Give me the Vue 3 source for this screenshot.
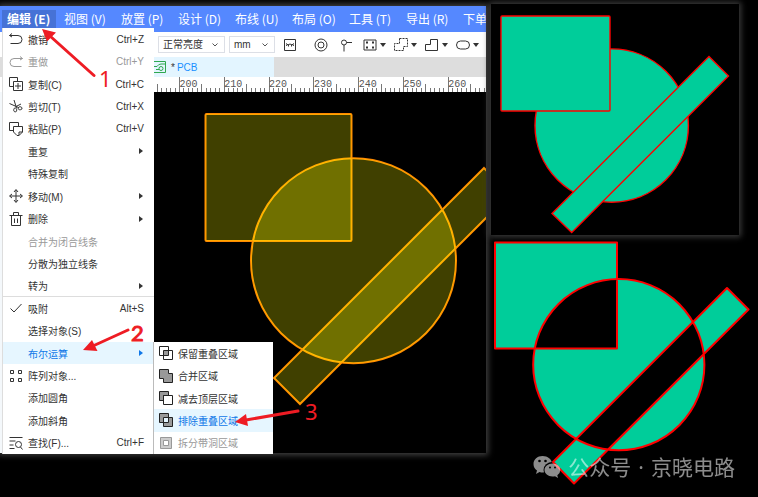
<script setup>
const menus = ['编辑 (E)', '视图 (V)', '放置 (P)', '设计 (D)', '布线 (U)', '布局 (O)', '工具 (T)', '导出 (R)', '下单']

const items = [
  { label: '撤销', key: 'Ctrl+Z', icon: 'undo' },
  { label: '重做', key: 'Ctrl+Y', icon: 'redo', off: true },
  { label: '复制(C)', key: 'Ctrl+C', icon: 'copy' },
  { label: '剪切(T)', key: 'Ctrl+X', icon: 'cut' },
  { label: '粘贴(P)', key: 'Ctrl+V', icon: 'paste' },
  { label: '重复', more: true },
  { label: '特殊复制' },
  { label: '移动(M)', more: true, icon: 'move' },
  { label: '删除', more: true, icon: 'trash' },
  { label: '合并为闭合线条', off: true },
  { label: '分散为独立线条' },
  { label: '转为', more: true },
  { label: '吸附', key: 'Alt+S', icon: 'check', rule: true },
  { label: '选择对象(S)' },
  { label: '布尔运算', more: true, on: true },
  { label: '阵列对象...', icon: 'array' },
  { label: '添加圆角' },
  { label: '添加斜角' },
  { label: '查找(F)...', key: 'Ctrl+F', icon: 'find' },
]

const icons = {
  undo: 'M3 1.5L.5 3.5L3 5M.5 3.5H9a4 4 0 0 1 0 8H1.5',
  redo: 'M11 1.5l2.500 2L11 5M13.500 3.500H5a4 4 0 0 0 0 8h7.500',
  copy: 'M4 9.5H0.5v-9h8V4M4.5 4.5h9v9h-9zM9 6v6M6 9h6',
  cut: 'M0.5 4.5l9 4M5 1l2.500 8M10 8a2 1.500 0 1 0 3 1a2 1.500 0 0 0-3-1M6.500 9a1.500 2 0 1 0 1 3a1.500 2 0 0 0-1-3M7 7.500l5-2.500',
  paste: 'M4 8.500H0.5v-8h9V4M4.500 4.500h9v5.500l-3.500 3.500h-2L4.500 10zM10 13.500V10h3.500',
  move: 'M7 1v12M1 7h12M5 3l2-2.500L9 3M5 11l2 2.500L9 11M3 5L.5 7L3 9M11 5l2.500 2L11 9',
  trash: 'M0.500 3.500h13M4.500 3V0.500h5V3M2.500 4v9.500h9V4M5.500 6.500v4.500M8.500 6.500v4.500',
  check: 'M1.500 7.500l3.500 3.500l7.500-8',
  array: 'M1.500 1.500h3v3h-3zM9.500 1.500h3v3h-3zM1.500 9.500h3v3h-3zM9.500 9.500h3v3h-3z',
  find: 'M0.500 1.500h13M0.500 5h6M0.500 9h4M0.500 12.500h5M12.500 8.500a3 3 0 1 1-6 0a3 3 0 1 1 6 0M11.500 11l2 2.500',
}

const booleans = [
  { label: '保留重叠区域', fill: 'M4.500 4.500h5v5h-5z', line: 'M0.500 0.500h9v9h-9zM4.500 4.500h9v9h-9z' },
  { label: '合并区域', fill: 'M0.500 0.500h9v4h4v9h-9v-4h-4z', line: 'M0.500 0.500h9v4h4v9h-9v-4h-4z' },
  { label: '减去顶层区域', fill: 'M0.500 0.500h9v4h-5v5h-4z', line: 'M0.500 0.500h9v4h-5v5h-4zM4.500 4.500h9v9h-9z' },
  { label: '排除重叠区域', fill: 'M0.500 0.500h9v4h4v9h-9v-4h-4zM4.500 4.500v5h5v-5z', line: 'M0.500 0.500h9v9h-9zM4.500 4.500h9v9h-9z', on: true },
  { label: '拆分带洞区域', fill: 'M1.500 1.500h11v11h-11zM4.500 4.500v5h5v-5z', line: 'M1.500 1.500h11v11h-11zM4.500 4.500h5v5h-5z', off: true },
]

const tools = [
  { name: '挖槽区域', d: 'M1 2h12v10h-12z', dots: true },
  { name: '禁止区域', d: 'M5.500 .5h8v8h-4v4h-9v-7h5z', dash: true },
  { name: '铺铜区域', d: 'M5.500 1.500h7v11h-12v-6h5z' },
  { name: '圆角槽', d: 'M4.500 3h5a4 4 0 0 1 0 8h-5a4 4 0 0 1 0-8z' },
]

const labels = [200, 210, 220, 230, 240, 250, 260].map((n, i) => ({ n, x: 179.500 + i * 44.800 }))
const ticks = []
for (let i = -5; i < 69; i++) {
  const kind = ((i % 10) + 10) % 10
  ticks.push({ x: Math.round(179 + i * 4.480) + 0.5, y: kind === 0 ? 77 : kind === 5 ? 84 : 88 })
}
</script>

<template>
  <main class="page">
    <section class="editor">
      <nav class="menubar">
        <button v-for="(m, i) in menus" :key="m" :class="{ active: i === 0 }">{{ m }}</button>
      </nav>

      <div class="toolbar">
        <label class="pick bright">
          <select aria-label="亮度"><option>正常亮度</option></select>
          <svg viewBox="0 0 8 8"><path d="M1.500 2.500L4 5l2.500-2.500" /></svg>
        </label>
        <label class="pick unit">
          <select aria-label="单位"><option>mm</option></select>
          <svg viewBox="0 0 8 8"><path d="M1.500 2.500L4 5l2.500-2.500" /></svg>
        </label>
        <button class="tool first" aria-label="隐藏">
          <svg class="ico" viewBox="0 0 14 14"><path d="M1.500 1.500h11v11h-11zM3 5.500q2 2.500 4 .5q2 2 4-.5M3.500 8l.500-1.500M5.500 8.500V7M8.500 8.500V7M10.500 8l-.5-1.500" /></svg>
        </button>
        <span class="divider"></span>
        <button class="tool" aria-label="过孔">
          <svg class="ico" viewBox="0 0 14 14"><circle cx="7" cy="7" r="6" /><circle cx="7" cy="7" r="3" /></svg>
        </button>
        <button class="tool pin" aria-label="测试点">
          <svg class="ico" viewBox="0 0 14 14"><circle cx="5" cy="4.500" r="2.500" /><path d="M7.500 4.500H13M5 7v6.500" /></svg>
        </button>
        <button v-for="t in tools" :key="t.name" class="tool drop" :aria-label="t.name">
          <svg class="ico" viewBox="0 0 14 14">
            <path :d="t.d" :class="{ dash: t.dash }" />
            <path v-if="t.dots" class="dots" d="M3 4.500h2M9 4.500h2M3 9.500h2M9 9.500h2" />
          </svg>
          <i class="caret"></i>
        </button>
      </div>

      <div class="tabs">
        <a class="tab" href="#pcb">
          <svg viewBox="0 0 12 12"><path d="M0 .5h11.500v11H0M0 5.500h3q1.500-2.500 4-2.500h4.500M2 8.500h3" /><circle cx="7" cy="7.500" r="2" /></svg>
          <span><b>*</b>PCB</span>
        </a>
      </div>

      <svg class="ruler" viewBox="154 77 332 15">
        <path v-for="t in ticks" :key="t.x" :d="`M${t.x} ${t.y}V92`" />
        <text v-for="l in labels" :key="l.n" :x="l.x" y="87">{{ l.n }}</text>
      </svg>

      <div class="work">
        <aside></aside>
        <svg class="board" viewBox="154 92 332 361">
          <g class="edge">
            <rect x="205.500" y="114" width="146" height="127" rx="1" />
            <circle cx="353.500" cy="260.700" r="102.500" />
            <path d="M484 168L510 194L300 404L274 378z" />
          </g>
          <g class="area">
            <rect x="205.500" y="114" width="146" height="127" rx="1" />
            <circle cx="353.500" cy="260.700" r="102.500" />
            <path d="M484 168L510 194L300 404L274 378z" />
          </g>
        </svg>
      </div>

      <div class="menu">
        <button v-for="it in items" :key="it.label" :class="{ off: it.off, on: it.on, rule: it.rule }">
          <svg class="ico" viewBox="0 0 14 14"><path v-if="it.icon" :d="icons[it.icon]" /></svg>
          <span class="name">{{ it.label }}</span>
          <span v-if="it.key" class="key">{{ it.key }}</span>
          <i v-if="it.more" class="more"></i>
        </button>
      </div>

      <div class="menu sub">
        <button v-for="b in booleans" :key="b.label" :class="{ off: b.off, on: b.on }">
          <svg class="ico bool" viewBox="0 0 14 14">
            <path class="solid" fill-rule="evenodd" :d="b.fill" />
            <path :d="b.line" />
          </svg>
          <span class="name">{{ b.label }}</span>
        </button>
      </div>

      <svg class="notes" viewBox="0 6 486 447" preserveAspectRatio="xMinYMin">
        <path class="shaft" d="M94 75.500L50 36M128 330L94 345.500M298 411L246 420" />
        <path class="head" d="M42 29L56 32.500L47 41.500zM83 350L92 340L97.500 351zM235 422L246 414L248 426z" />
        <text x="99" y="87">1</text>
        <text class="bold" x="131" y="341">2</text>
        <text x="305" y="420">3</text>
      </svg>
    </section>

    <div class="results">
      <figure class="before">
        <svg viewBox="491 4 248 231">
          <circle cx="611.700" cy="125.600" r="76.700" />
          <rect x="501" y="16" width="109" height="95" rx="1" />
          <path d="M709 56.500L728.500 76L571.700 232.500L552 213.500z" />
        </svg>
      </figure>
      <figure class="after">
        <svg viewBox="486 235 272 262">
          <path
            fill-rule="evenodd"
            d="M495 242.500H617V348.500H495zM533.200 364.700a85.600 85.600 0 1 1 171.200 0a85.600 85.600 0 1 1-171.200 0zM727 288L748.500 309.500L574 483.500L553 462z"
          />
        </svg>
        <figcaption>
          <svg viewBox="0 0 28 24">
            <mask id="bubbles">
              <rect width="28" height="24" fill="#fff" />
              <ellipse cx="19.500" cy="15" rx="9" ry="8" fill="#000" />
              <circle cx="6.500" cy="6" r="1.300" fill="#000" />
              <circle cx="12.500" cy="6" r="1.300" fill="#000" />
            </mask>
            <mask id="eyes">
              <rect width="28" height="24" fill="#fff" />
              <circle cx="17" cy="12.500" r="1" fill="#000" />
              <circle cx="22" cy="12.500" r="1" fill="#000" />
            </mask>
            <path mask="url(#bubbles)" d="M9.500 1C4.500 1 .5 4.500 .5 9q0 4 3.500 6.500l-1 3.500l3.500-2q1.500 .5 3.500 .5c5 0 9-3.500 9-8.500S14.500 1 9.500 1z" />
            <path mask="url(#eyes)" d="M19.500 8.500c-4.500 0-8 3-8 6.500s3.500 6.500 8 6.500q1.500 0 2.500-.3l3 1.800l-.7-2.700q3-2 3-5.300c0-3.500-3.300-6.500-7.800-6.500z" />
          </svg>
          <span>公众号</span><span>·</span><span>京晓电路</span>
        </figcaption>
      </figure>
    </div>
  </main>
</template>

<style>
body {
  background: #000;
}
</style>

<style scoped>
.page {
  display: grid;
  grid-template-columns: 486fr 272fr;
  align-items: start;
  overflow: hidden;
  font-family: "Liberation Sans", "Noto Sans CJK SC", sans-serif;
  font-size: 10px;
  color: #333;
}

button,
select {
  border: 0;
  margin: 0;
  padding: 0;
  background: none;
  font: inherit;
  color: inherit;
}

svg {
  display: block;
}

.ico {
  width: 14px;
  height: 14px;
  flex: none;
  fill: none;
  stroke: currentColor;
}

.editor {
  position: relative;
  margin-top: 6px;
  min-width: 0;
  box-shadow: 0 0 6px 2px #444;
  clip-path: inset(-6px -10px -10px 0);
}

.menubar {
  display: flex;
  align-items: center;
  gap: 3px;
  height: 26px;
  padding-left: 2px;
  overflow: hidden;
  background: #5588ff;
  font: 12px "Noto Sans CJK SC", sans-serif;
  color: #fff;
}

.menubar button {
  flex: none;
  width: 54px;
  height: 18px;
  padding-left: 5px;
  line-height: 18px;
  text-align: left;
  white-space: nowrap;
}

.menubar button:last-child {
  width: auto;
}

.menubar .active {
  background: #4672d6;
  font-weight: 700;
}

.toolbar {
  display: flex;
  align-items: center;
  height: 25px;
  padding-left: 158px;
  background: #fff;
  overflow: hidden;
}

.pick {
  display: flex;
  align-items: center;
  flex: none;
  height: 17px;
  box-sizing: border-box;
  border: 1px solid #dcdfe6;
  padding: 0 5px 0 4px;
  margin-right: 4px;
}

.pick select {
  flex: 1;
  min-width: 0;
  appearance: none;
}

.pick svg {
  width: 8px;
  height: 8px;
  fill: none;
  stroke: #555;
}

.bright {
  width: 67px;
}

.unit {
  width: 46px;
}

.tool {
  display: flex;
  align-items: center;
  gap: 3px;
  flex: none;
  margin-right: 8px;
}

.first {
  margin-left: 4px;
}

.divider {
  width: 1px;
  height: 23px;
  margin-right: 9px;
  background: #ccc;
}

.pin {
  margin: 0 10px 0 3px;
}

.caret {
  border: 3px solid transparent;
  border-top: 4px solid #333;
  border-bottom: 0;
}

.dash {
  stroke-dasharray: 2 1;
}

.dots {
  stroke-width: 2;
}

.tabs {
  display: flex;
  height: 20px;
  padding-left: 154px;
  background: #ddd;
}

.tab {
  display: flex;
  align-items: center;
  gap: 5px;
  width: 120px;
  background: #e3f5ff;
  color: #1890ff;
  text-decoration: none;
}

.tab svg {
  width: 12px;
  height: 12px;
  fill: none;
  stroke: #2fa84f;
}

.tab b {
  font-weight: 400;
  color: #333;
  padding-right: 2px;
}

.ruler {
  box-sizing: border-box;
  width: 100%;
  padding-left: 154px;
  background: #fff;
}

.ruler path {
  stroke: #777;
}

.ruler text {
  font: 10px "Liberation Mono", monospace;
  fill: #555;
}

.work {
  display: flex;
  background: #000;
}

.work aside {
  flex: 0 0 154px;
  background: #f4f8fb;
}

.board {
  flex: 1;
  min-width: 0;
}

.edge {
  fill: none;
  stroke: #ff8a00;
  stroke-width: 2;
}

.area {
  fill: #ff0;
  fill-opacity: 0.25;
}

.menu {
  position: absolute;
  top: 22px;
  bottom: -1px;
  left: 2px;
  width: 152px;
  box-sizing: border-box;
  display: flex;
  flex-direction: column;
  border-left: 1px solid #ddd;
  background: #fff;
}

.menu button {
  flex: 1;
  min-height: 0;
  display: flex;
  align-items: center;
  gap: 5px;
  padding: 0 10px 0 6px;
  text-align: left;
  white-space: nowrap;
}

.name {
  flex: 1;
}

.menu .on {
  background: #e6f6ff;
  color: #1078e8;
}

.menu .off {
  color: #999;
}

.menu .rule {
  box-shadow: 0 -1px #ddd;
}

.more {
  border: 3px solid transparent;
  border-left: 4px solid currentColor;
  border-right: 0;
  margin-right: 1px;
}

.sub {
  top: 336px;
  left: 153px;
  width: 120px;
  border-color: #bbb;
}

.sub button {
  padding-left: 5px;
}

.bool {
  color: #222;
}

.off .bool {
  color: #999;
}

.solid {
  fill: #999;
  stroke: none;
}

.off .solid {
  fill: #ccc;
}

.notes {
  position: absolute;
  top: 0;
  left: 0;
  width: 100%;
  height: 100%;
  pointer-events: none;
}

.shaft {
  stroke: #ee1c24;
  stroke-width: 3;
  stroke-linecap: round;
}

.head,
.notes text {
  fill: #ee1c24;
}

.notes text {
  font: 22px "Noto Sans", sans-serif;
}

.notes .bold {
  font-family: Lato, sans-serif;
  stroke: #ee1c24;
}

.results {
  min-width: 0;
}

.results figure {
  margin: 0;
}

.before {
  position: relative;
  background: #000;
  box-shadow: 0 0 6px 2px #3c3c3c;
}

.results .before {
  margin: 4px 19px 0 5px;
}

.before svg,
.after > svg {
  width: 100%;
  fill: #00cd9a;
  stroke: #f00;
}

.before svg {
  stroke-width: 1.4;
}

.after {
  position: relative;
}

.after > svg {
  stroke-width: 2;
  stroke-linejoin: round;
}

figcaption {
  position: absolute;
  right: 23px;
  bottom: 15px;
  display: flex;
  align-items: center;
  gap: 7px;
  font: 21px/30px "Noto Sans", "Noto Sans CJK SC", sans-serif;
  color: #fff;
  opacity: 0.55;
}

figcaption svg {
  width: 28px;
  height: 24px;
  fill: #fff;
}
</style>
